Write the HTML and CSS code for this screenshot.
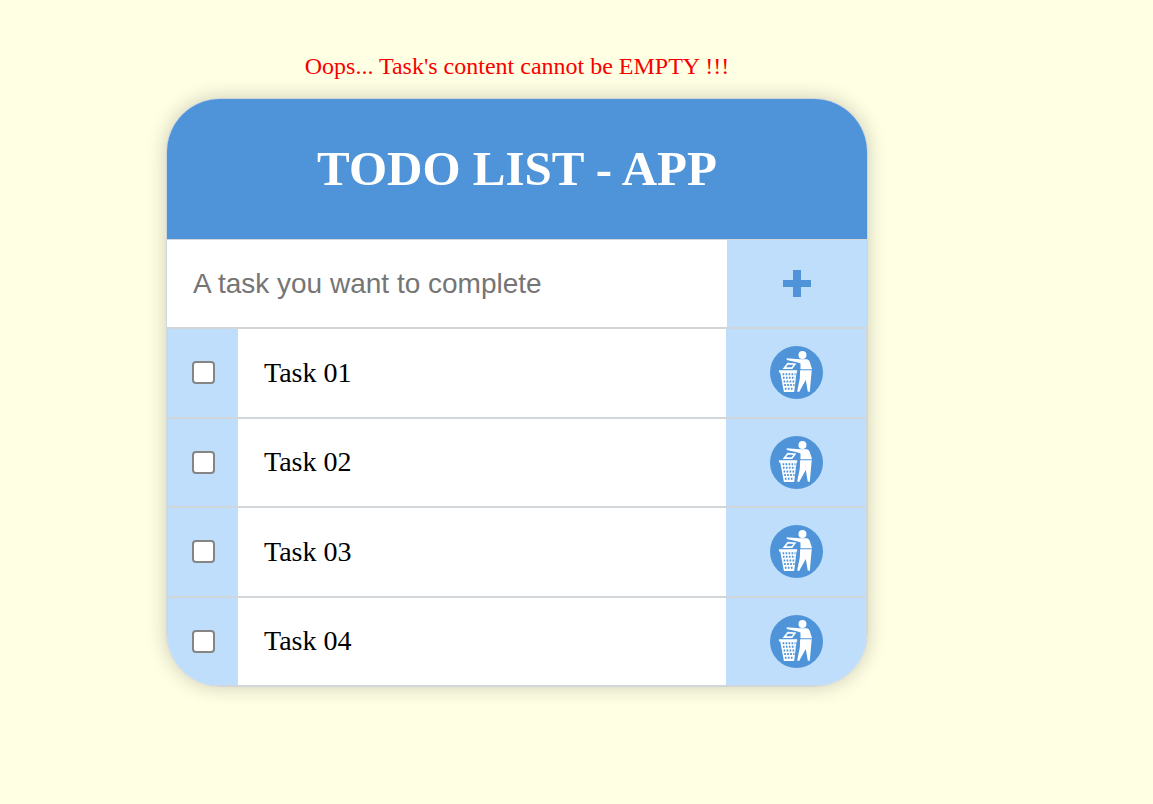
FILE: index.html
```html
<!DOCTYPE html>
<html lang="en">
<head>
<meta charset="utf-8">
<meta name="viewport" content="width=device-width, initial-scale=1">
<title>Todo List - App</title>
<link rel="stylesheet" href="styles.css">
</head>
<body>
<svg class="sprite" aria-hidden="true">
  <symbol id="trash" viewBox="0 0 160 160">
    <circle class="disc" cx="80" cy="80" r="80"/>
    <g class="figure">
      <circle cx="98" cy="27" r="12"/>
      <path d="M50 37 L90 40 H112 Q118 42 120 48 L127 70 H92 V53 L84 50 L51 42 Z"/>
      <path d="M91 73 H126 L120 139 L114 137 L108 103 L88 139 L82 137 L90 98 Z"/>
      <path class="paper" d="M43 67 L54 53 L75 55 L66 67 Z"/>
      <path d="M27 73 H82 V80 H80 L73 139 H42 L31 80 H27 Z"/>
    </g>
    <path class="holes" d="M38 85 H77 M39 96 H76 M41 107 H75 M43 118 H74 M45 129 H72"/>
  </symbol>
</svg>
<main class="page">
  <p class="error" role="alert">Oops... Task's content cannot be EMPTY !!!</p>
  <section class="card">
    <h1 class="title">TODO LIST - APP</h1>
    <form class="entry">
      <input class="entry-text" type="text" placeholder="A task you want to complete" aria-label="New task">
      <button class="add" type="button" aria-label="Add task"><svg class="plus" viewBox="0 0 28 28" aria-hidden="true"><path d="M10 0h8v10h10v7H18v10h-8V17H0v-7h10z"/></svg></button>
    </form>
    <ul class="tasks">
      <li class="task"><span class="check"><input class="box" type="checkbox" id="t1"></span><label class="name" for="t1">Task 01</label><button class="delete" type="button" aria-label="Delete Task 01"><svg class="trash"><use href="#trash"/></svg></button></li>
      <li class="task"><span class="check"><input class="box" type="checkbox" id="t2"></span><label class="name" for="t2">Task 02</label><button class="delete" type="button" aria-label="Delete Task 02"><svg class="trash"><use href="#trash"/></svg></button></li>
      <li class="task"><span class="check"><input class="box" type="checkbox" id="t3"></span><label class="name" for="t3">Task 03</label><button class="delete" type="button" aria-label="Delete Task 03"><svg class="trash"><use href="#trash"/></svg></button></li>
      <li class="task"><span class="check"><input class="box" type="checkbox" id="t4"></span><label class="name" for="t4">Task 04</label><button class="delete" type="button" aria-label="Delete Task 04"><svg class="trash"><use href="#trash"/></svg></button></li>
    </ul>
  </section>
</main>
</body>
</html>
```
FILE: styles.css
```css
* { box-sizing: border-box; }
body {
  margin: 0;
  background: #ffffe4;
  font-family: "Liberation Serif", "Times New Roman", serif;
  color: #000;
}
.sprite { display: none; }
.page {
  display: flex;
  flex-direction: column;
  align-items: center;
  padding: 50px 119px 50px 0;
}
.error {
  margin: 0 0 16px;
  font-size: 24px;
  line-height: 32px;
  color: #f80000;
}
.card {
  width: 100%;
  max-width: 702px;
  border: 1px solid #d0d6da;
  border-radius: 54px;
  overflow: hidden;
  background: #fff;
  box-shadow: 0 0 20px rgba(0, 0, 0, 0.2);
}
.title {
  margin: 0;
  background: #4f94d8;
  color: #fff;
  font-size: 49px;
  line-height: 140px;
  text-align: center;
}
.entry {
  display: flex;
  min-height: 89px;
  border-top: 1px solid #d0d6da;
  border-bottom: 1px solid #d0d6da;
}
.entry-text {
  flex: 1;
  min-width: 0;
  border: 0;
  outline: 0;
  padding: 0 26px;
  background: #fff;
  font-family: "Liberation Sans", Arial, sans-serif;
  font-size: 28px;
}
.entry-text::placeholder { color: #757575; }
.add, .delete {
  flex: 0 0 140px;
  display: flex;
  align-items: center;
  justify-content: center;
  border: 0;
  padding: 0;
  background: #bfdefb;
  cursor: pointer;
}
.plus { width: 28px; height: 28px; fill: #4f94d8; }
.tasks {
  display: grid;
  grid-auto-rows: 1fr;
  min-height: 358px;
  margin: 0;
  padding: 0;
  list-style: none;
}
.task {
  display: flex;
  border: 1px solid #d0d6da;
}
.check {
  flex: 0 0 70px;
  display: flex;
  align-items: center;
  justify-content: center;
  background: #bfdefb;
}
.box {
  width: 23px;
  height: 23px;
  margin: 0;
  appearance: none;
  border: 2px solid #858585;
  border-radius: 4px;
  background: #fff;
}
.box:checked { background: #4f94d8; }
.name {
  flex: 1;
  display: flex;
  align-items: center;
  padding: 0 26px;
  font-size: 28px;
}
.trash { width: 53px; height: 53px; }
.disc { fill: #4f94d8; }
.figure { fill: #fff; }
.paper { fill: #4f94d8; stroke: #fff; stroke-width: 5; }
.holes { stroke: #4f94d8; stroke-width: 6; stroke-dasharray: 5 4; }
```
